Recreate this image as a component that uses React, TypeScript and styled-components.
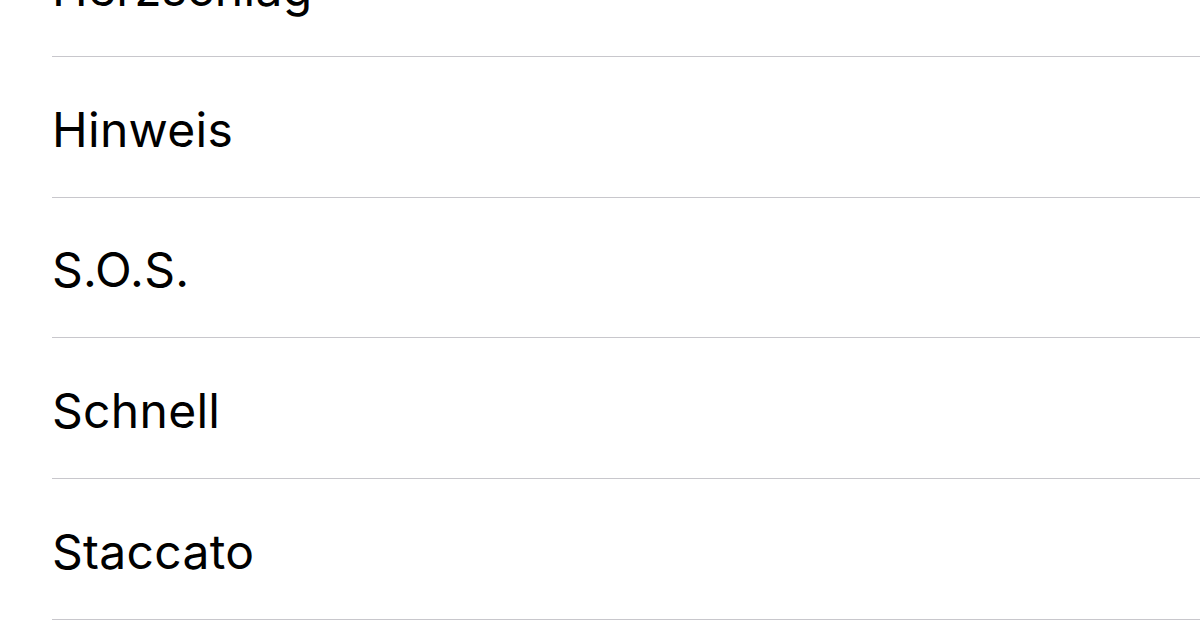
import styled, { createGlobalStyle } from 'styled-components';

const GlobalStyle = createGlobalStyle`
  html, body {
    margin: 0;
    padding: 0;
    background: #ffffff;
  }
  body {
    font-family: Inter, "Liberation Sans", sans-serif;
    -webkit-font-smoothing: antialiased;
  }
`;

const Screen = styled.div`
  width: 1200px;
  height: 628px;
  overflow: hidden;
  background: #ffffff;
`;

// list is scrolled: first row sits partly above the top edge
const List = styled.ul`
  list-style: none;
  margin: -84px 0 0 0;
  padding: 0;
`;

const Row = styled.li`
  padding-left: 52px;
`;

const RowInner = styled.div`
  height: 140.75px;
  box-sizing: border-box;
  border-bottom: 1px solid #c8c7cc;
  display: flex;
  align-items: center;
  padding-top: 6px;
`;

const Label = styled.span`
  font-size: 48px;
  line-height: 1;
  color: #000000;
  letter-spacing: 0.3px;
`;

const items = ['Herzschlag', 'Hinweis', 'S.O.S.', 'Schnell', 'Staccato'];

const App = () => {
  return (
    <Screen>
      <GlobalStyle />
      <List>
        {items.map((item) => (
          <Row key={item}>
            <RowInner>
              <Label>{item}</Label>
            </RowInner>
          </Row>
        ))}
      </List>
    </Screen>
  );
};

export default App;
